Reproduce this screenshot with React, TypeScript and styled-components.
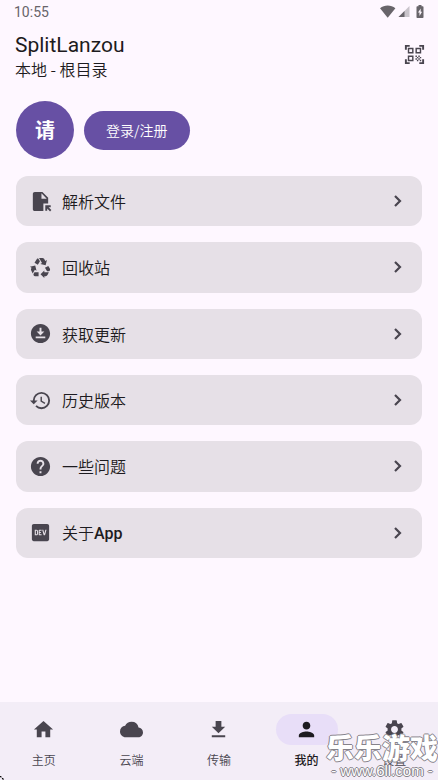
import React from "react";
import styled, { createGlobalStyle } from "styled-components";
import {
  MdCloud,
  MdDownload,
  MdDownloadForOffline,
  MdFileOpen,
  MdHelp,
  MdHistory,
  MdHome,
  MdLogoDev,
  MdPerson,
  MdQrCodeScanner,
  MdRecycling,
  MdSettings,
} from "react-icons/md";

const color = {
  page: "#fef7ff",
  card: "#e6e0e7",
  nav: "#f3edf7",
  pill: "#e8def8",
  primary: "#6750a4",
  text: "#1d1b20",
  muted: "#49454f",
  status: "#68646a",
};

const GlobalStyle = createGlobalStyle`
  *, *::before, *::after { box-sizing: border-box; }
  body {
    margin: 0;
    background: ${color.page};
    color: ${color.text};
    font-family: "Noto Sans CJK SC", Roboto, sans-serif;
  }
  button { font: inherit; color: inherit; border: 0; padding: 0; background: none; cursor: pointer; }
`;

const Screen = styled.div`
  position: relative;
  display: flex;
  flex-direction: column;
  min-height: 100vh;
  overflow: hidden;
`;

const StatusBar = styled.div`
  display: flex;
  justify-content: space-between;
  align-items: center;
  height: 24px;
  padding: 0 14px;
  color: ${color.status};
  font-family: Roboto, sans-serif;
  font-size: 14px;
  line-height: 24px;
`;

const StatusIcons = styled.div`
  display: flex;
  align-items: center;
  height: 22px;
`;

const Header = styled.header`
  display: flex;
  justify-content: space-between;
  align-items: center;
  height: 60px;
  padding: 0 12px 0 15px;
`;

const Heading = styled.div`
  padding-top: 6px;
`;

const Title = styled.h1`
  margin: 0;
  font-family: Roboto, sans-serif;
  font-size: 21px;
  font-weight: 400;
  line-height: 24px;
`;

const Subtitle = styled.p`
  margin: 0;
  font-size: 16px;
  font-weight: 350;
  line-height: 24px;
`;

const ScanButton = styled.button`
  display: flex;
  color: ${color.muted};
`;

const Content = styled.main`
  flex: 1;
  padding: 17px 16px;
`;

const Account = styled.section`
  display: flex;
  align-items: center;
  gap: 10px;
  margin-bottom: 17px;
`;

const Avatar = styled.div`
  display: grid;
  place-items: center;
  width: 58px;
  height: 58px;
  border-radius: 50%;
  background: ${color.primary};
  color: #fff;
  font-size: 20px;
  font-weight: 700;
  line-height: 24px;
`;

const LoginButton = styled.button`
  && {
    height: 39px;
    padding: 0 22px;
    border-radius: 20px;
    background: ${color.primary};
    color: #fff;
    font-size: 14px;
    font-weight: 350;
    line-height: 24px;
  }
`;

const Menu = styled.ul`
  display: grid;
  grid-auto-rows: 1fr;
  gap: 16px;
  min-height: 382px;
  margin: 0;
  padding: 0;
  list-style: none;
`;

const MenuRow = styled.button`
  && {
    display: flex;
    align-items: center;
    width: 100%;
    height: 100%;
    padding: 0 20px 0 13px;
    border-radius: 12px;
    background: ${color.card};
    text-align: left;
  }
  svg {
    flex: none;
    color: ${color.muted};
  }
`;

const MenuLabel = styled.span`
  flex: 1;
  margin-left: 10px;
  font-size: 16px;
  font-weight: 350;
  line-height: 24px;
`;

const Latin = styled.span`
  font-family: Roboto, sans-serif;
  font-weight: 500;
`;

const NavBar = styled.nav`
  display: flex;
  height: 78px;
  padding-top: 12px;
  background: ${color.nav};
`;

const NavItem = styled.button<{ $active?: boolean }>`
  && {
    display: flex;
    flex: 1;
    flex-direction: column;
    align-items: center;
    gap: 5px;
    color: ${(p) => (p.$active ? color.text : color.muted)};
    font-size: 12px;
    font-weight: ${(p) => (p.$active ? 500 : 350)};
    line-height: 20px;
  }
`;

const NavPill = styled.span<{ $active?: boolean }>`
  display: grid;
  place-items: center;
  width: 62px;
  height: 31px;
  border-radius: 16px;
  background: ${(p) => (p.$active ? color.pill : "transparent")};
`;

const Watermark = styled.div`
  position: absolute;
  right: 0;
  bottom: 0;
  display: flex;
  flex-direction: column;
  align-items: center;
  color: #fff;
  text-align: center;
  white-space: nowrap;
  pointer-events: none;
  text-shadow: 1px 0 #85828a, -1px 0 #85828a, 0 1px #85828a, 0 -1px #85828a;
`;

const WatermarkName = styled.span`
  font-size: 28px;
  font-weight: 900;
  line-height: 29px;
`;

const WatermarkSite = styled.span`
  font-family: "Liberation Sans", sans-serif;
  font-size: 15px;
  line-height: 18px;
`;

const CornerMark = styled.svg`
  position: absolute;
  left: 0;
  bottom: 0;
`;

const Chevron = () => (
  <svg width="9" height="14" viewBox="0 0 9 14" fill="none" aria-hidden="true">
    <path d="M2 2l5 5-5 5" stroke="currentColor" strokeWidth="2.2" />
  </svg>
);

const menu = [
  { icon: MdFileOpen, label: "解析文件" },
  { icon: MdRecycling, label: "回收站" },
  { icon: MdDownloadForOffline, label: "获取更新" },
  { icon: MdHistory, label: "历史版本" },
  { icon: MdHelp, label: "一些问题" },
  { icon: MdLogoDev, label: "关于", latin: "App" },
];

const tabs = [
  { icon: MdHome, label: "主页" },
  { icon: MdCloud, label: "云端" },
  { icon: MdDownload, label: "传输" },
  { icon: MdPerson, label: "我的", active: true },
  { icon: MdSettings, label: "设置" },
];

export default function App() {
  return (
    <Screen>
      <GlobalStyle />
      <StatusBar>
        <span>10:55</span>
        <StatusIcons>
          <svg width="44" height="14" viewBox="0 0 44 14" fill="currentColor" aria-hidden="true">
            <path d="M0 3.2C4.4-.3 11-.3 15.4 3.2L7.7 12.8z" />
            <path d="M29.5 1v11H18.5z" opacity=".35" />
            <path d="M24.5 6v6h-6z" />
            <path
              fillRule="evenodd"
              d="M38.5 0h3v1.3h1.2c.5 0 .8.3.8.8v10.1c0 .5-.3.8-.8.8h-5.4c-.5 0-.8-.3-.8-.8V2.1c0-.5.3-.8.8-.8h1.2zM40.7 3.5l-2.7 4h1.5v3.500l2.600-4.300h-1.400z"
            />
          </svg>
        </StatusIcons>
      </StatusBar>
      <Header>
        <Heading>
          <Title>SplitLanzou</Title>
          <Subtitle>本地 - 根目录</Subtitle>
        </Heading>
        <ScanButton type="button" aria-label="扫码">
          <MdQrCodeScanner size={23} />
        </ScanButton>
      </Header>
      <Content>
        <Account>
          <Avatar>请</Avatar>
          <LoginButton type="button">登录/注册</LoginButton>
        </Account>
        <Menu>
          {menu.map(({ icon: Icon, label, latin }) => (
            <li key={label}>
              <MenuRow type="button">
                <Icon size={23} />
                <MenuLabel>
                  {label}
                  {latin && <Latin>{latin}</Latin>}
                </MenuLabel>
                <Chevron />
              </MenuRow>
            </li>
          ))}
        </Menu>
      </Content>
      <NavBar>
        {tabs.map(({ icon: Icon, label, active }) => (
          <NavItem key={label} type="button" $active={active} aria-current={active ? "page" : undefined}>
            <NavPill $active={active}>
              <Icon size={23} />
            </NavPill>
            {label}
          </NavItem>
        ))}
      </NavBar>
      <Watermark>
        <WatermarkName>乐乐游戏</WatermarkName>
        <WatermarkSite>- www.6ll.com -</WatermarkSite>
      </Watermark>
      <CornerMark width="4" height="4" viewBox="0 0 4 4" aria-hidden="true">
        <path d="M0 0l4 4" stroke="#000" strokeWidth="1.2" strokeDasharray="2 1" />
      </CornerMark>
    </Screen>
  );
}
